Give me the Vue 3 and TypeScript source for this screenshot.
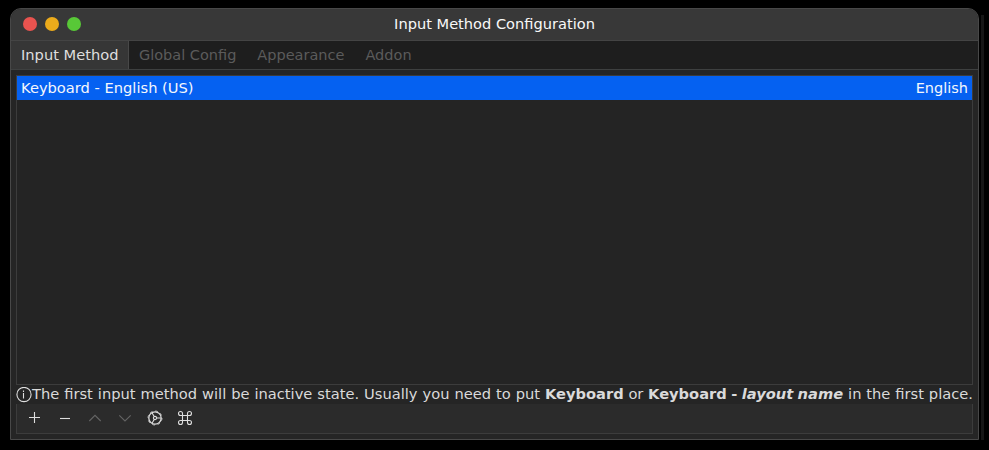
<script setup lang="ts">
import { ref } from 'vue'

const tabs = ['Input Method', 'Global Config', 'Appearance', 'Addon']
const activeTab = ref(0)
const methods = [{ name: 'Keyboard - English (US)', language: 'English' }]
const controls = ['close', 'minimize', 'maximize']
</script>

<template>
  <div class="desktop">
    <main class="window">
      <header class="titlebar">
        <div class="controls">
          <span v-for="c in controls" :key="c" :class="['control', c]"></span>
        </div>
        <h1>Input Method Configuration</h1>
      </header>
      <nav class="tabs">
        <button
          v-for="(tab, i) in tabs"
          :key="tab"
          :class="['tab', { active: i === activeTab }]"
          @click="activeTab = i"
        >{{ tab }}</button>
      </nav>
      <section class="page">
        <div class="list">
          <div v-for="m in methods" :key="m.name" class="row">
            <span>{{ m.name }}</span>
            <span class="language">{{ m.language }}</span>
          </div>
        </div>
        <div class="info">
          <svg class="info-icon" viewBox="0 0 16 16">
            <circle cx="8" cy="7.5" r="7.1" />
            <path d="M7.5 6V11.5M7.5 3.5V5" />
          </svg>
          <p><span class="lead">The first input method will be inactive state. Usually you need to put </span><b>Keyboard</b> or <b class="layout">Keyboard - <i>layout name</i></b><span class="tail"> in the first place.</span></p>
        </div>
        <div class="toolbar">
          <button class="tool"><svg viewBox="0 0 16 16"><path d="M2 7.5H13M7.5 2V13" /></svg></button>
          <button class="tool"><svg viewBox="0 0 16 16"><path d="M3 8.5H13" /></svg></button>
          <button class="tool disabled"><svg viewBox="0 0 16 16"><path d="M2.3 11L8 5.3L13.7 11" /></svg></button>
          <button class="tool disabled"><svg viewBox="0 0 16 16"><path d="M2.3 5.3L8 11L13.7 5.3" /></svg></button>
          <button class="tool">
            <svg viewBox="0 0 16 16">
              <circle class="rim" cx="8" cy="8" r="6.2" />
              <circle class="teeth" cx="8" cy="8" r="7" />
              <circle cx="8" cy="8" r="1.6" />
              <path d="M9.6 8H14M7.2 6.6L5 2.7M7.2 9.4L5 13.3" />
            </svg>
          </button>
          <button class="tool">
            <svg viewBox="0 0 16 16">
              <path d="M5.5 5.5H3.5A2 2 0 1 1 5.5 3.5V12.5A2 2 0 1 1 3.5 10.5H12.5A2 2 0 1 1 10.5 12.5V3.5A2 2 0 1 1 12.5 5.5Z" />
            </svg>
          </button>
        </div>
      </section>
    </main>
  </div>
</template>

<style>
body {
  margin: 0;
  background: #000;
}
</style>

<style scoped>
.desktop {
  box-sizing: border-box;
  height: 450px;
  padding: 8px 10px 10px;
  overflow: hidden;
  background: #000;
  color: #dadada;
  font: 14.667px/20px "DejaVu Sans", sans-serif;
}
.window {
  box-sizing: border-box;
  display: flex;
  flex-direction: column;
  width: 969px;
  height: 432px;
  border: 1px solid #484848;
  border-radius: 11px 11px 0 0;
  background: #252525;
  overflow: hidden;
}
.desktop::after {
  content: "";
  position: absolute;
  left: 981px;
  top: 15px;
  width: 3px;
  height: 425px;
  background: #161616;
}
.titlebar {
  display: grid;
  grid-template-columns: 1fr auto 1fr;
  align-items: center;
  flex: 0 0 32px;
  box-sizing: border-box;
  padding: 0 12px 2px;
  border-bottom: 1px solid #444;
  background: #383838;
}
.controls {
  display: flex;
  gap: 8px;
}
.control {
  width: 14px;
  height: 14px;
  border-radius: 50%;
}
.close { background: #e9534f; }
.minimize { background: #ecab1b; }
.maximize { background: #58c837; }
h1 {
  margin: 0;
  font: inherit;
  font-size: 14.6px;
  color: #f8f8f8;
}
.tabs {
  display: flex;
  box-sizing: border-box;
  flex: 0 0 29px;
  border-bottom: 1px solid #3e4040;
  background: #1e1e1e;
}
button {
  margin: 0;
  border: 0;
  background: none;
  color: inherit;
  font: inherit;
}
.tab {
  padding: 0 10px;
  border-right: 1px solid transparent;
  color: #5b5b5b;
  font-size: 14.5px;
}
.tab.active {
  padding-right: 9.4px;
  border-color: #484848;
  background: #363636;
  color: #dedede;
  font-size: 14.667px;
}
.page {
  display: flex;
  flex: 1;
  flex-direction: column;
  padding: 5px;
}
.list {
  box-sizing: border-box;
  height: 310px;
  border: 1px solid #3c3c3c;
  background: #242424;
}
.row {
  display: flex;
  justify-content: space-between;
  padding: 0 4px;
  background: #0561f1;
  color: #f4f7fc;
  line-height: 24px;
}
.language { font-size: 14.5px; }
.info {
  display: flex;
  height: 19px;
  align-items: center;
  white-space: nowrap;
}
.info p {
  margin: 0;
  padding-bottom: 2px;
}
.lead { word-spacing: 0.3px; }
.layout { word-spacing: -0.7px; }
.tail { word-spacing: 0.25px; }
svg {
  display: block;
  width: 16px;
  height: 16px;
  fill: none;
  stroke: #dedede;
  stroke-width: 1.1;
}
.info-icon { flex: none; }
.toolbar {
  box-sizing: border-box;
  display: flex;
  align-items: center;
  height: 30px;
  padding: 0 3px 2px;
  border: 1px solid #3c3c3c;
  border-top: 0;
  background: #2b2b2b;
}
.tool {
  display: flex;
  align-items: center;
  justify-content: center;
  width: 30px;
  height: 26px;
  padding: 0;
}
.disabled svg { stroke: #646464; }
.rim { stroke-width: 1.3; }
.teeth {
  stroke-width: 0.8;
  stroke-dasharray: 2.6 2.9;
}
</style>
